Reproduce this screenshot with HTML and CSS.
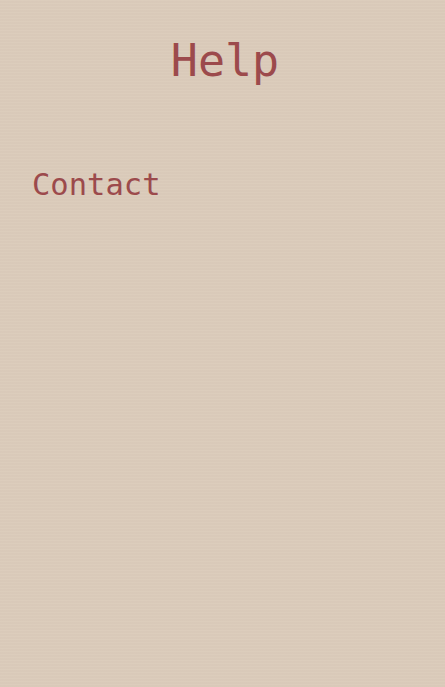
FILE: index.html
```html
<!DOCTYPE html>
<html>
<head>
<meta charset="utf-8">
<link rel="stylesheet" href="styles.css">
</head>
<body>
<main class="page">
  <h1 class="title">Help</h1>
  <section class="content">
    <h2 class="section-title">Contact</h2>
  </section>
</main>
</body>
</html>
```
FILE: styles.css
```css
html, body {
  margin: 0;
  padding: 0;
  height: 100%;
}
body {
  background-color: #dbcbba;
  background-image: repeating-linear-gradient(to bottom, rgba(255,255,255,0.035) 0px, rgba(255,255,255,0.035) 1px, rgba(0,0,0,0.008) 1px, rgba(0,0,0,0.008) 3px);
  font-family: "DejaVu Sans Mono", monospace;
  color: #9c4a4c;
}
.page {
  padding: 0 32px;
}
.title {
  margin: 0;
  padding-top: 33px;
  padding-left: 5px;
  text-align: center;
  font-size: 45px;
  font-weight: normal;
  line-height: 56px;
}
.content {
  padding-top: 76px;
}
.section-title {
  margin: 0;
  font-size: 30.5px;
  font-weight: normal;
  line-height: 40px;
}
```
